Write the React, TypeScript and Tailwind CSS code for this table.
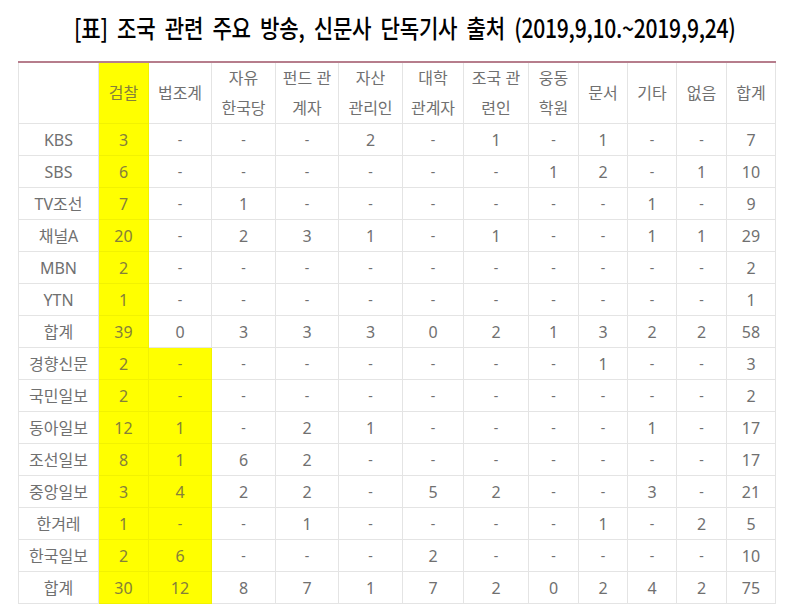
import React from "react";

const widths = [80, 50, 63, 64, 63, 64, 61, 65, 50, 49, 49, 50, 49];

const headers: string[][] = [
  [""],
  ["검찰"],
  ["법조계"],
  ["자유", "한국당"],
  ["펀드 관", "계자"],
  ["자산", "관리인"],
  ["대학", "관계자"],
  ["조국 관", "련인"],
  ["웅동", "학원"],
  ["문서"],
  ["기타"],
  ["없음"],
  ["합계"],
];

const rows: string[][] = [
  ["KBS", "3", "-", "-", "-", "2", "-", "1", "-", "1", "-", "-", "7"],
  ["SBS", "6", "-", "-", "-", "-", "-", "-", "1", "2", "-", "1", "10"],
  ["TV조선", "7", "-", "1", "-", "-", "-", "-", "-", "-", "1", "-", "9"],
  ["채널A", "20", "-", "2", "3", "1", "-", "1", "-", "-", "1", "1", "29"],
  ["MBN", "2", "-", "-", "-", "-", "-", "-", "-", "-", "-", "-", "2"],
  ["YTN", "1", "-", "-", "-", "-", "-", "-", "-", "-", "-", "-", "1"],
  ["합계", "39", "0", "3", "3", "3", "0", "2", "1", "3", "2", "2", "58"],
  ["경향신문", "2", "-", "-", "-", "-", "-", "-", "-", "1", "-", "-", "3"],
  ["국민일보", "2", "-", "-", "-", "-", "-", "-", "-", "-", "-", "-", "2"],
  ["동아일보", "12", "1", "-", "2", "1", "-", "-", "-", "-", "1", "-", "17"],
  ["조선일보", "8", "1", "6", "2", "-", "-", "-", "-", "-", "-", "-", "17"],
  ["중앙일보", "3", "4", "2", "2", "-", "5", "2", "-", "-", "3", "-", "21"],
  ["한겨레", "1", "-", "-", "1", "-", "-", "-", "-", "1", "-", "2", "5"],
  ["한국일보", "2", "6", "-", "-", "-", "2", "-", "-", "-", "-", "-", "10"],
  ["합계", "30", "12", "8", "7", "1", "7", "2", "0", "2", "4", "2", "75"],
];

function isYellow(r: number, c: number) {
  if (c === 1) return true;
  if (c === 2 && r >= 7) return true;
  return false;
}

export default function App() {
  return (
    <div
      className="w-[795px] h-[614px] bg-white overflow-hidden"
      style={{ fontFamily: '"Noto Sans", "Noto Sans CJK KR", sans-serif' }}
    >
      <div className="h-[61px] flex items-center justify-center pl-[15px] pb-[8px]">
        <div
          className="text-[24px] leading-none font-medium text-black scale-x-[0.88] scale-y-[1.05] whitespace-nowrap tracking-[-0.3px] [word-spacing:5.5px]"
          style={{ fontFamily: '"Noto Sans CJK KR", sans-serif' }}
        >
          [표] 조국 관련 주요 방송, 신문사 단독기사 출처 (2019,9,10.~2019,9,24)
        </div>
      </div>
      <div className="ml-[18px] w-[757px]">
        <table className="table-fixed border-collapse w-[757px] border-t-2 border-t-[#b67d8c] text-[#707070] text-[16px]">
          <colgroup>
            {widths.map((w, i) => (
              <col key={i} style={{ width: w }} />
            ))}
          </colgroup>
          <thead>
            <tr className="h-[61px]">
              {headers.map((h, i) => (
                <th
                  key={i}
                  className={
                    "font-normal text-center align-middle border border-t-0 leading-[30px] p-0 whitespace-nowrap " +
                    (i === 1
                      ? "bg-[#ffff00] border-[#f2f200] text-[#85803a]"
                      : "border-[#e4e4e4]")
                  }
                >
                  {h.map((line, j) => (
                    <div key={j}>{line}</div>
                  ))}
                </th>
              ))}
            </tr>
          </thead>
          <tbody>
            {rows.map((row, r) => (
              <tr key={r} className="h-[32px]">
                {row.map((cell, c) => {
                  const y = isYellow(r, c);
                  return (
                    <td
                      key={c}
                      className={
                        "text-center align-middle p-0 leading-none border whitespace-nowrap " +
                        (y
                          ? "bg-[#ffff00] border-[#f2f200] text-[#85803a]"
                          : "border-[#e4e4e4]") +
                        (cell === "-" ? " text-[14px]" : "")
                      }
                    >
                      {cell}
                    </td>
                  );
                })}
              </tr>
            ))}
          </tbody>
        </table>
      </div>
    </div>
  );
}
